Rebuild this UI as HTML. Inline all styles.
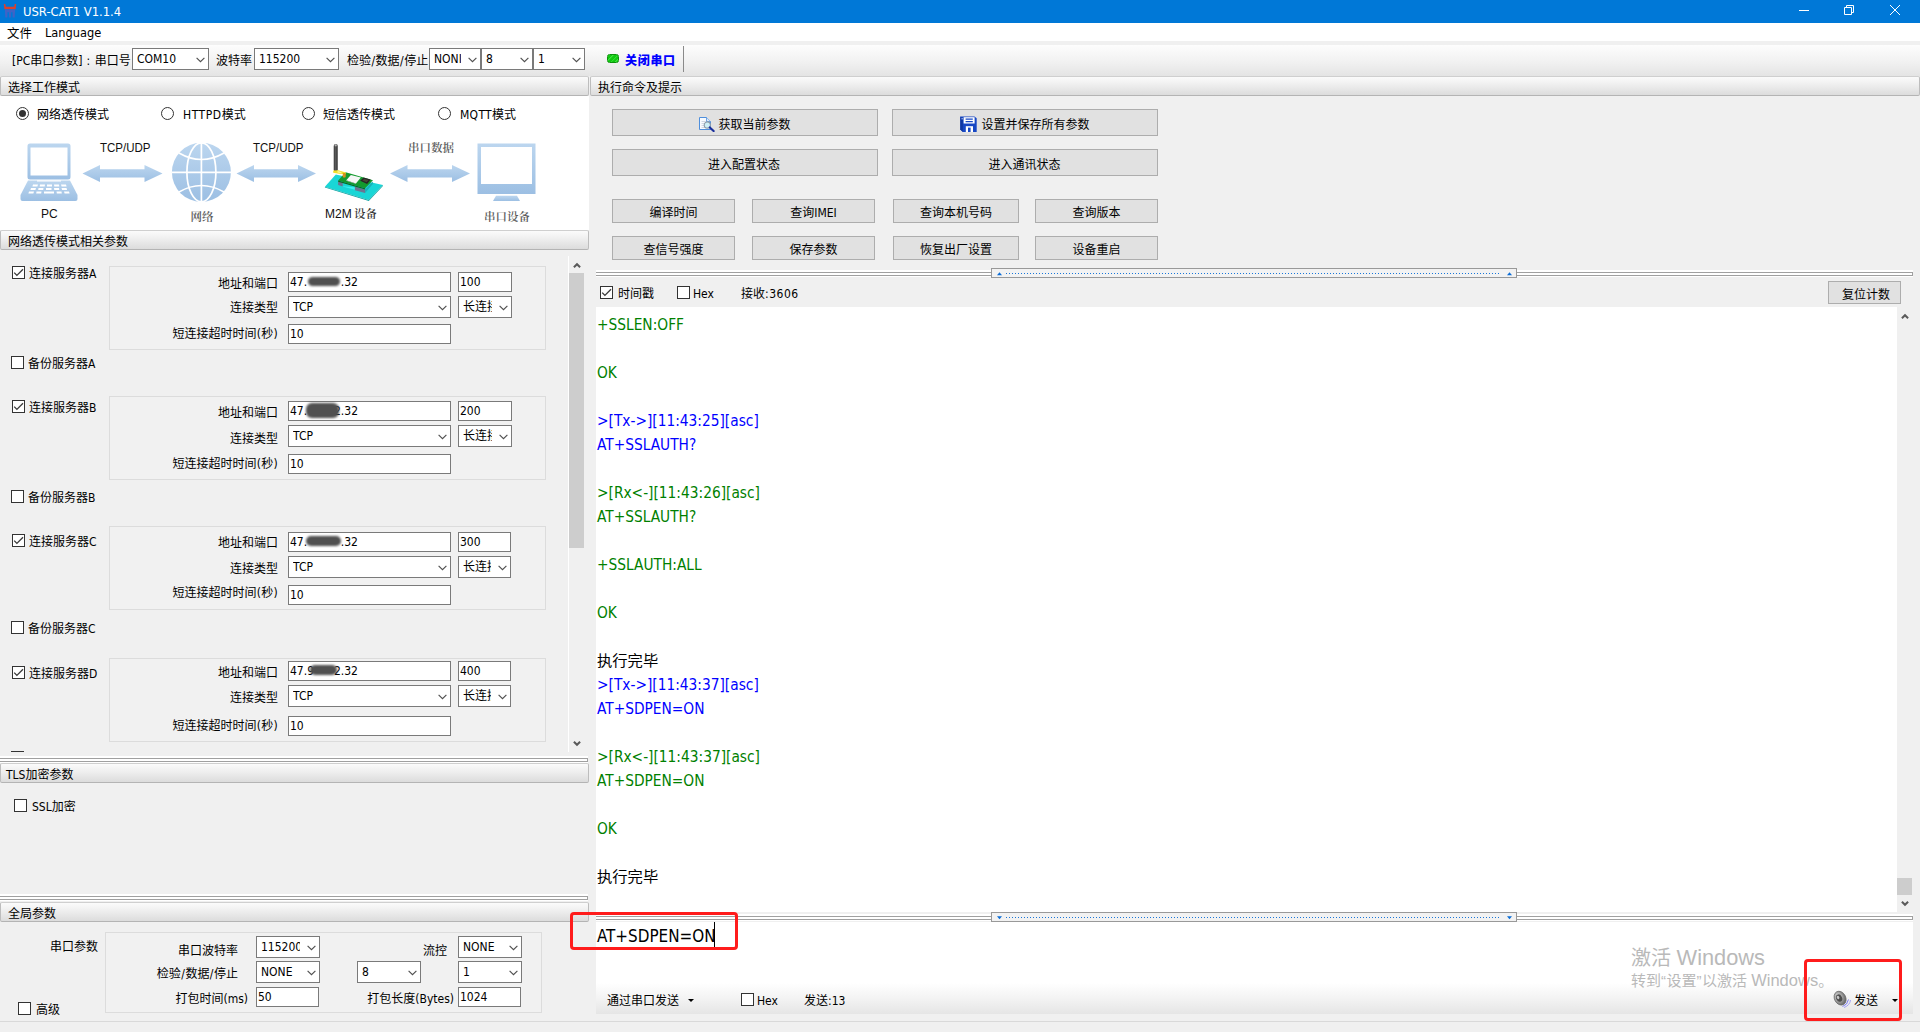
<!DOCTYPE html><html lang="zh-CN"><head><meta charset="utf-8"><title>USR-CAT1 V1.1.4</title><style>
*{box-sizing:border-box;margin:0;padding:0}
html,body{width:1920px;height:1032px;overflow:hidden;background:#f0f0f0}
body{font-family:"DejaVu Sans Condensed","Liberation Sans","Noto Sans CJK SC",sans-serif;font-size:12px;color:#000;position:relative}
#app{position:absolute;left:0;top:0;width:1920px;height:1032px;overflow:hidden;background:#f0f0f0}
.a{position:absolute}
.t{position:absolute;white-space:nowrap;font-size:12px;line-height:14px;height:14px}
.r{text-align:right}
.hd{position:absolute;height:20px;border:1px solid #bdbdbd;border-top-color:#cfcfcf;border-bottom-color:#b4b4b4;border-radius:2px;background:linear-gradient(#fbfbfb,#eeeeee 45%,#dcdcdc);}
.hd span{position:absolute;left:7px;top:4px;line-height:14px;white-space:nowrap}
.in{position:absolute;background:#fff;border:1px solid #7a7a7a;height:20px;line-height:18px;padding-left:1px;white-space:nowrap;overflow:hidden}
.cb{position:absolute;background:#fff;border:1px solid #7a7a7a;height:22px;line-height:20px;padding-left:4px;white-space:nowrap;overflow:hidden}
.cl{display:block;overflow:hidden;height:100%}
.cb svg{position:absolute;right:3.5px;top:7.5px}
.ck{position:absolute;width:13px;height:13px;border:1px solid #333;background:#fff}
.ck svg{position:absolute;left:0;top:0}
.gb{position:absolute;border:1px solid #dcdcdc;background:#f1f1f1}
.bt{position:absolute;background:#e1e1e1;border:1px solid #adadad;text-align:center;white-space:nowrap}
.rd{position:absolute;width:13px;height:13px;border:1px solid #333;border-radius:50%;background:#fff}
.rd i{position:absolute;left:2px;top:2px;width:7px;height:7px;border-radius:50%;background:#333}
.log{position:absolute;font-size:15.3px;line-height:24px;white-space:pre}
.sl{display:inline-block;width:4.6px;text-align:center}.pr{display:inline-block;width:4.7px;text-align:center}
.g{color:#008000}.b{color:#0000ff}
.smudge{position:absolute;background:#505050;border-radius:6px;filter:blur(0.8px)}
</style></head><body><div id="app">
<div class="a" style="left:0;top:0;width:1920px;height:23px;background:#0078d7"></div>
<svg class="a" style="left:0;top:0" width="20" height="23" viewBox="0 0 20 23"><path d="M3.8 4 L5.3 4 L5.9 6.8 H14.1 L14.7 4 L16.2 4 L15.6 9.3 H4.4 Z" fill="#d9412e"/><path d="M4.9 9.6 H15.1 L14.7 17.6 H12.7 L12.5 12.2 H11 L10.9 17.6 H9.1 L9 12.2 H7.5 L7.3 17.6 H5.3 Z" fill="#3f63c6"/></svg>
<div class="t" style="left:23px;top:4px;color:#fff;font-size:12.9px;line-height:16px;height:16px">USR-CAT1 V1.1.4</div>
<svg class="a" style="left:1790px;top:0" width="130" height="23" viewBox="0 0 130 23"><g stroke="#fff" stroke-width="1" fill="none"><path d="M9 10.5 H19"/><path d="M54.5 7.5 H61.5 V14.5 H54.5 Z M56.5 7.5 V5.5 H63.5 V12.5 H61.5"/><path d="M100 5 L110 15 M110 5 L100 15"/></g></svg>
<div class="a" style="left:0;top:23px;width:1920px;height:18px;background:#fff"></div>
<div class="t " style="left:7px;top:27px;font-size:12.4px;letter-spacing:.2px">文件</div>
<div class="t " style="left:45px;top:26px;font-size:12.7px">Language</div>
<div class="a" style="left:0;top:45px;width:1920px;height:31px;background:linear-gradient(#fdfdfd,#f1f1f1 55%,#e4e4e4)"></div>
<div class="t " style="left:12px;top:54px;">[PC串口参数]<span style="letter-spacing:.6px"> : </span>串口号</div>
<div class="cb" style="left:132px;top:48px;width:77px;height:22px;line-height:20px"><span class="cl" style="width:52px">COM10</span><svg width="9" height="6" viewBox="0 0 9 6"><path d="M0.6 0.8 L4.5 4.6 L8.4 0.8" fill="none" stroke="#505050" stroke-width="1.15"/></svg></div>
<div class="t " style="left:216px;top:54px;">波特率</div>
<div class="cb" style="left:254px;top:48px;width:85px;height:22px;line-height:20px"><span class="cl" style="width:60px">115200</span><svg width="9" height="6" viewBox="0 0 9 6"><path d="M0.6 0.8 L4.5 4.6 L8.4 0.8" fill="none" stroke="#505050" stroke-width="1.15"/></svg></div>
<div class="t " style="left:347px;top:54px;">检验<span class="sl">/</span>数据<span class="sl">/</span>停止</div>
<div class="cb" style="left:429px;top:48px;width:52px;height:22px;line-height:20px"><span class="cl" style="width:27px">NONI</span><svg width="9" height="6" viewBox="0 0 9 6"><path d="M0.6 0.8 L4.5 4.6 L8.4 0.8" fill="none" stroke="#505050" stroke-width="1.15"/></svg></div>
<div class="cb" style="left:481px;top:48px;width:52px;height:22px;line-height:20px"><span class="cl" style="width:27px">8</span><svg width="9" height="6" viewBox="0 0 9 6"><path d="M0.6 0.8 L4.5 4.6 L8.4 0.8" fill="none" stroke="#505050" stroke-width="1.15"/></svg></div>
<div class="cb" style="left:533px;top:48px;width:52px;height:22px;line-height:20px"><span class="cl" style="width:27px">1</span><svg width="9" height="6" viewBox="0 0 9 6"><path d="M0.6 0.8 L4.5 4.6 L8.4 0.8" fill="none" stroke="#505050" stroke-width="1.15"/></svg></div>
<div class="a" style="left:607px;top:54px;width:12px;height:9px;border-radius:2.5px;border:1px solid #0b920b;background:repeating-linear-gradient(135deg,#4be84b 0,#10c810 1.6px,#10c810 3.2px)"></div>
<div class="t " style="left:625px;top:54px;color:#0000ff;font-weight:900;font-size:12px;letter-spacing:.7px">关闭串口</div>
<div class="a" style="left:683px;top:46px;width:1px;height:26px;background:#8a8a8a"></div>
<div class="hd" style="left:0px;top:76px;width:589px"><span>选择工作模式</span></div>
<div class="a" style="left:0;top:96px;width:589px;height:134px;background:#fff"></div>
<div class="rd" style="left:16px;top:107px"><i></i></div>
<div class="t " style="left:37px;top:108px;">网络透传模式</div>
<div class="rd" style="left:161px;top:107px"></div>
<div class="t " style="left:183px;top:108px;"><span style="letter-spacing:.55px">HTTPD</span>模式</div>
<div class="rd" style="left:302px;top:107px"></div>
<div class="t " style="left:323px;top:108px;">短信透传模式</div>
<div class="rd" style="left:438px;top:107px"></div>
<div class="t " style="left:460px;top:108px;"><span style="letter-spacing:.3px">MQTT</span>模式</div>
<svg class="a" style="left:0;top:130px" width="589" height="100" viewBox="0 130 589 100">
<defs><linearGradient id="lb" x1="0" y1="0" x2="0" y2="1"><stop offset="0" stop-color="#bcd6ef"/><stop offset="1" stop-color="#9cbfe3"/></linearGradient></defs>
<g fill="url(#lb)">
<path d="M30 143.5 H68 Q70.5 143.5 70.5 146 V177 Q70.5 179.5 68 179.5 H30 Q27.5 179.5 27.5 177 V146 Q27.5 143.5 30 143.5 Z M30.5 147.5 V175.5 H67.5 V147.5 Z" fill-rule="evenodd"/>
<path d="M28 180.5 H70 L77.5 195 V199 Q77.5 201 75.5 201 H22.5 Q20.5 201 20.5 199 V195 Z"/>
<path d="M82.5 173.4 L100 165 V169.3 H144.5 V165 L162.5 173.4 L144.5 182 V177.6 H100 V182 Z"/>
<path d="M236.5 173.4 L254 165 V169.3 H298 V165 L316 173.4 L298 182 V177.6 H254 V182 Z"/>
<path d="M390 173.4 L407.5 165 V169.3 H452 V165 L470 173.4 L452 182 V177.6 H407.5 V182 Z"/>
<circle cx="201.4" cy="172.3" r="29.5"/>
<path d="M477.5 143.5 H535.5 V194 H477.5 Z M481 147 V184 H532 V147 Z" fill-rule="evenodd"/>
<path d="M496 195.8 H517 L520 201 H493 Z"/>
</g>
<g stroke="#fff" stroke-width="1.7" fill="none">
<path d="M201.4 142.5 V202"/><path d="M171.5 172.3 H231.5"/>
<ellipse cx="201.4" cy="172.3" rx="14.5" ry="29.5"/>
<path d="M179 153 Q201.4 166 224 153"/><path d="M179 192 Q201.4 179 224 192"/>
</g>
<g fill="#fff">
<path d="M33 184.5 h5 l-.6 2 h-5z M40 184.5 h5 l-.3 2 h-5z M47 184.5 h5 l0 2 h-5z M54 184.5 h5 l.3 2 h-5z M61 184.5 h5 l.6 2 h-5z"/>
<path d="M31 188 h5 l-.6 2 h-5z M38.5 188 h5 l-.3 2 h-5z M46 188 h5.5 l0 2 h-5.5z M54 188 h5 l.3 2 h-5z M61.5 188 h5 l.6 2 h-5z"/>
<path d="M29 191.5 h5 l-.6 2 h-5z M36.5 191.5 h5 l-.3 2 h-5z M44 191.5 h10 l0 2 h-10z M56.5 191.5 h5 l.3 2 h-5z M64 191.5 h5 l.6 2 h-5z"/>
<rect x="37" y="180.3" width="24" height="1.2"/>
</g>
<!-- m2m device -->
<path d="M324.9 186.7 L335.8 174.6 L382.9 185.1 L368.7 199.9 Z" fill="#19d6d6"/>
<path d="M324.9 186.7 L368.7 199.9 L382.9 185.1 L382.9 186 L368.8 200.9 L324.9 187.6 Z" fill="#0fa3a3"/>
<path d="M342 186.2 L355 187.3 L355 189.8 L342.5 186.5 Z" fill="#3af2f2"/>
<path d="M338.1 181.3 L342.7 182.7 V186.4 L338.1 185 Z" fill="#6c7492"/>
<path d="M354.9 186.6 L365.1 189.4 V193 L354.9 190.2 Z" fill="#6c7492"/>
<path d="M365.1 189.4 L372.8 181.6 V184 L365.1 193 Z" fill="#1ab0b8"/>
<path d="M338.1 180.6 L345.7 172.3 L373 180.2 L365.1 188.3 Z" fill="#139a2e"/>
<path d="M338.1 180.6 L365.1 188.3 V189.6 L338.1 181.8 Z" fill="#0b6a20"/>
<path d="M346.3 180.2 L350.9 174.9 L360.8 177.5 L355.9 183.5 Z" fill="#f6f6f6"/>
<path d="M346.3 180.2 L355.9 183.5 L356.2 184.1 L346.2 180.8 Z" fill="#b9b9c4"/>
<path d="M360.2 180.8 L363.5 177.5 L370.7 179.5 L367.1 184.1 Z" fill="#262626"/>
<path d="M362.3 180.6 L364.2 178.9 L368.6 180.1 L366.6 182.2 Z" fill="#4a4436"/>
<rect x="333.7" y="143.9" width="4.1" height="27.5" rx="2" fill="#474747"/>
<rect x="334.6" y="144.3" width="2.2" height="2.2" rx="1.1" fill="#b5b5b5"/>
<rect x="335.1" y="147" width="1" height="23" fill="#6a6a6a" opacity=".6"/>
<path d="M333.2 170.4 L338.2 170.2 L345.8 172.4 L345.8 174.2 L340.5 174 L333.2 172.8 Z" fill="#efe02a"/>
<path d="M337.5 171 L341.5 172 L341.5 173.5 L337.5 172.6 Z" fill="#f8f3a0"/>
<rect x="342.8" y="172.9" width="2.9" height="4.6" rx=".8" fill="#d98f22"/>
<g font-family="Liberation Sans, sans-serif" font-size="12" fill="#111">
<text x="100" y="151.8" textLength="50.5" lengthAdjust="spacingAndGlyphs">TCP/UDP</text>
<text x="253" y="151.8" textLength="50.5" lengthAdjust="spacingAndGlyphs">TCP/UDP</text>
<text x="41" y="217.6">PC</text>
<text x="325" y="217.6">M2M</text>
</g>
<g font-family="Noto Serif CJK SC, serif" font-size="11.5" font-weight="600" fill="#5a5a5a">
<text x="190.5" y="221">网络</text>
<text x="408" y="151.5">串口数据</text>
<text x="484" y="221">串口设备</text>
<text x="354" y="217.8" fill="#333">设备</text>
</g>
</svg>
<div class="hd" style="left:0px;top:230px;width:589px"><span>网络透传模式相关参数</span></div>
<div class="a" style="left:0;top:251px;width:589px;height:506px;overflow:hidden">
<div class="a" style="left:0;top:-251px;width:589px;height:760px">
<div class="ck" style="left:12px;top:266px"><svg width="11" height="11" viewBox="0 0 11 11"><path d="M1.2 5.6 L3.9 8.4 L10 2.3" fill="none" stroke="#3c3c3c" stroke-width="1.35"/></svg></div>
<div class="t " style="left:29px;top:267px;">连接服务器A</div>
<div class="gb" style="left:109px;top:266px;width:437px;height:84px"></div>
<div class="t r" style="left:-22px;width:300px;top:277px;">地址和端口</div>
<div class="in" style="left:288px;top:272px;width:163px;height:20px;line-height:18px">47.<span style="display:inline-block;width:33.6px"></span>.32</div>
<div class="in" style="left:458px;top:272px;width:54px;height:20px;line-height:18px">100</div>
<div class="t r" style="left:-22px;width:300px;top:301px;">连接类型</div>
<div class="cb" style="left:288px;top:296px;width:163px;height:22px;line-height:20px"><span class="cl" style="width:138px">TCP</span><svg width="9" height="6" viewBox="0 0 9 6"><path d="M0.6 0.8 L4.5 4.6 L8.4 0.8" fill="none" stroke="#505050" stroke-width="1.15"/></svg></div>
<div class="cb" style="left:458px;top:296px;width:54px;height:22px;line-height:20px"><span class="cl" style="width:29px">长连接</span><svg width="9" height="6" viewBox="0 0 9 6"><path d="M0.6 0.8 L4.5 4.6 L8.4 0.8" fill="none" stroke="#505050" stroke-width="1.15"/></svg></div>
<div class="t r" style="left:-22px;width:300px;top:327px;">短连接超时时间<span class="pr">(</span>秒<span class="pr">)</span></div>
<div class="in" style="left:288px;top:324px;width:163px;height:20px;line-height:18px">10</div>
<div class="ck" style="left:11px;top:356px"></div>
<div class="t " style="left:28px;top:357px;">备份服务器A</div>
<div class="smudge" style="left:308px;top:277px;width:32px;height:9px"></div>
<div class="ck" style="left:12px;top:400px"><svg width="11" height="11" viewBox="0 0 11 11"><path d="M1.2 5.6 L3.9 8.4 L10 2.3" fill="none" stroke="#3c3c3c" stroke-width="1.35"/></svg></div>
<div class="t " style="left:29px;top:401px;">连接服务器B</div>
<div class="gb" style="left:109px;top:396px;width:437px;height:84px"></div>
<div class="t r" style="left:-22px;width:300px;top:406px;">地址和端口</div>
<div class="in" style="left:288px;top:401px;width:163px;height:20px;line-height:18px">47.<span style="display:inline-block;width:26.8px"></span>2.32</div>
<div class="in" style="left:458px;top:401px;width:54px;height:20px;line-height:18px">200</div>
<div class="t r" style="left:-22px;width:300px;top:432px;">连接类型</div>
<div class="cb" style="left:288px;top:425px;width:163px;height:22px;line-height:20px"><span class="cl" style="width:138px">TCP</span><svg width="9" height="6" viewBox="0 0 9 6"><path d="M0.6 0.8 L4.5 4.6 L8.4 0.8" fill="none" stroke="#505050" stroke-width="1.15"/></svg></div>
<div class="cb" style="left:458px;top:425px;width:54px;height:22px;line-height:20px"><span class="cl" style="width:29px">长连接</span><svg width="9" height="6" viewBox="0 0 9 6"><path d="M0.6 0.8 L4.5 4.6 L8.4 0.8" fill="none" stroke="#505050" stroke-width="1.15"/></svg></div>
<div class="t r" style="left:-22px;width:300px;top:457px;">短连接超时时间<span class="pr">(</span>秒<span class="pr">)</span></div>
<div class="in" style="left:288px;top:454px;width:163px;height:20px;line-height:18px">10</div>
<div class="ck" style="left:11px;top:490px"></div>
<div class="t " style="left:28px;top:491px;">备份服务器B</div>
<div class="smudge" style="left:306px;top:403px;width:33px;height:15px"></div>
<div class="ck" style="left:12px;top:534px"><svg width="11" height="11" viewBox="0 0 11 11"><path d="M1.2 5.6 L3.9 8.4 L10 2.3" fill="none" stroke="#3c3c3c" stroke-width="1.35"/></svg></div>
<div class="t " style="left:29px;top:535px;">连接服务器C</div>
<div class="gb" style="left:109px;top:526px;width:437px;height:84px"></div>
<div class="t r" style="left:-22px;width:300px;top:536px;">地址和端口</div>
<div class="in" style="left:288px;top:532px;width:163px;height:20px;line-height:18px">47.<span style="display:inline-block;width:33.6px"></span>.32</div>
<div class="in" style="left:458px;top:532px;width:53px;height:20px;line-height:18px">300</div>
<div class="t r" style="left:-22px;width:300px;top:562px;">连接类型</div>
<div class="cb" style="left:288px;top:556px;width:163px;height:22px;line-height:20px"><span class="cl" style="width:138px">TCP</span><svg width="9" height="6" viewBox="0 0 9 6"><path d="M0.6 0.8 L4.5 4.6 L8.4 0.8" fill="none" stroke="#505050" stroke-width="1.15"/></svg></div>
<div class="cb" style="left:458px;top:556px;width:53px;height:22px;line-height:20px"><span class="cl" style="width:28px">长连接</span><svg width="9" height="6" viewBox="0 0 9 6"><path d="M0.6 0.8 L4.5 4.6 L8.4 0.8" fill="none" stroke="#505050" stroke-width="1.15"/></svg></div>
<div class="t r" style="left:-22px;width:300px;top:586px;">短连接超时时间<span class="pr">(</span>秒<span class="pr">)</span></div>
<div class="in" style="left:288px;top:585px;width:163px;height:20px;line-height:18px">10</div>
<div class="ck" style="left:11px;top:621px"></div>
<div class="t " style="left:28px;top:622px;">备份服务器C</div>
<div class="smudge" style="left:306px;top:536px;width:35px;height:10px"></div>
<div class="ck" style="left:12px;top:666px"><svg width="11" height="11" viewBox="0 0 11 11"><path d="M1.2 5.6 L3.9 8.4 L10 2.3" fill="none" stroke="#3c3c3c" stroke-width="1.35"/></svg></div>
<div class="t " style="left:29px;top:667px;">连接服务器D</div>
<div class="gb" style="left:109px;top:658px;width:437px;height:84px"></div>
<div class="t r" style="left:-22px;width:300px;top:666px;">地址和端口</div>
<div class="in" style="left:288px;top:661px;width:163px;height:20px;line-height:18px">47.9<span style="display:inline-block;width:19.9px"></span>2.32</div>
<div class="in" style="left:458px;top:661px;width:53px;height:20px;line-height:18px">400</div>
<div class="t r" style="left:-22px;width:300px;top:691px;">连接类型</div>
<div class="cb" style="left:288px;top:685px;width:163px;height:22px;line-height:20px"><span class="cl" style="width:138px">TCP</span><svg width="9" height="6" viewBox="0 0 9 6"><path d="M0.6 0.8 L4.5 4.6 L8.4 0.8" fill="none" stroke="#505050" stroke-width="1.15"/></svg></div>
<div class="cb" style="left:458px;top:685px;width:53px;height:22px;line-height:20px"><span class="cl" style="width:28px">长连接</span><svg width="9" height="6" viewBox="0 0 9 6"><path d="M0.6 0.8 L4.5 4.6 L8.4 0.8" fill="none" stroke="#505050" stroke-width="1.15"/></svg></div>
<div class="t r" style="left:-22px;width:300px;top:719px;">短连接超时时间<span class="pr">(</span>秒<span class="pr">)</span></div>
<div class="in" style="left:288px;top:716px;width:163px;height:20px;line-height:18px">10</div>
<div class="smudge" style="left:310px;top:665px;width:27px;height:10px"></div>
<div class="a" style="left:11px;top:751px;width:13px;height:1px;background:#333"></div>
</div></div>
<div class="a" style="left:568px;top:256px;width:17px;height:495px;background:#f0f0f0"></div>
<div class="a" style="left:569px;top:273px;width:15px;height:275px;background:#cdcdcd"></div>
<div class="a" style="left:568px;top:256px;width:1px;height:496px;background:#fff"></div>
<svg class="a" style="left:573px;top:262px" width="8" height="6" viewBox="0 0 8 6"><path d="M0.9 5.3 L4 2.2 L7.1 5.3" fill="none" stroke="#5a5a5a" stroke-width="2"/></svg>
<svg class="a" style="left:573px;top:741px" width="8" height="6" viewBox="0 0 8 6"><path d="M0.9 0.7 L4 3.8 L7.1 0.7" fill="none" stroke="#5a5a5a" stroke-width="2"/></svg>
<div class="a" style="left:0px;top:756px;width:588px;height:7px;background:#fff"></div>
<div class="a" style="left:0px;top:758px;width:588px;height:4px;border-top:1px solid #a0a0a0;border-bottom:1px solid #a0a0a0;border-right:1px solid #a0a0a0"></div>
<div class="hd" style="left:0px;top:763px;width:589px"><span><span style="position:static;margin-left:-2px">TLS</span>加密参数</span></div>
<div class="ck" style="left:14px;top:799px"></div>
<div class="t " style="left:32px;top:800px;">SSL加密</div>
<div class="a" style="left:0px;top:894px;width:588px;height:7px;background:#fff"></div>
<div class="a" style="left:0px;top:896px;width:588px;height:4px;border-top:1px solid #a0a0a0;border-bottom:1px solid #a0a0a0;border-right:1px solid #a0a0a0"></div>
<div class="hd" style="left:0px;top:902px;width:589px"><span>全局参数</span></div>
<div class="t " style="left:50px;top:940px;">串口参数</div>
<div class="gb" style="left:105px;top:932px;width:437px;height:81px"></div>
<div class="t r" style="left:-62px;width:300px;top:944px;">串口波特率</div>
<div class="cb" style="left:256px;top:936px;width:64px;height:22px;line-height:20px"><span class="cl" style="width:39px">115200</span><svg width="9" height="6" viewBox="0 0 9 6"><path d="M0.6 0.8 L4.5 4.6 L8.4 0.8" fill="none" stroke="#505050" stroke-width="1.15"/></svg></div>
<div class="t r" style="left:147px;width:300px;top:944px;">流控</div>
<div class="cb" style="left:458px;top:936px;width:64px;height:22px;line-height:20px"><span class="cl" style="width:39px">NONE</span><svg width="9" height="6" viewBox="0 0 9 6"><path d="M0.6 0.8 L4.5 4.6 L8.4 0.8" fill="none" stroke="#505050" stroke-width="1.15"/></svg></div>
<div class="t r" style="left:-62px;width:300px;top:967px;">检验<span class="sl">/</span>数据<span class="sl">/</span>停止</div>
<div class="cb" style="left:256px;top:961px;width:64px;height:22px;line-height:20px"><span class="cl" style="width:39px">NONE</span><svg width="9" height="6" viewBox="0 0 9 6"><path d="M0.6 0.8 L4.5 4.6 L8.4 0.8" fill="none" stroke="#505050" stroke-width="1.15"/></svg></div>
<div class="cb" style="left:357px;top:961px;width:64px;height:22px;line-height:20px"><span class="cl" style="width:39px">8</span><svg width="9" height="6" viewBox="0 0 9 6"><path d="M0.6 0.8 L4.5 4.6 L8.4 0.8" fill="none" stroke="#505050" stroke-width="1.15"/></svg></div>
<div class="cb" style="left:458px;top:961px;width:64px;height:22px;line-height:20px"><span class="cl" style="width:39px">1</span><svg width="9" height="6" viewBox="0 0 9 6"><path d="M0.6 0.8 L4.5 4.6 L8.4 0.8" fill="none" stroke="#505050" stroke-width="1.15"/></svg></div>
<div class="t r" style="left:-52px;width:300px;top:992px;">打包时间(ms)</div>
<div class="in" style="left:256px;top:987px;width:63px;height:20px;line-height:18px">50</div>
<div class="t r" style="left:154px;width:300px;top:992px;">打包长度(Bytes)</div>
<div class="in" style="left:458px;top:987px;width:63px;height:20px;line-height:18px">1024</div>
<div class="ck" style="left:18px;top:1002px"></div>
<div class="t " style="left:36px;top:1003px;">高级</div>
<div class="hd" style="left:590px;top:76px;width:1330px"><span>执行命令及提示</span></div>
<div class="bt" style="left:612px;top:109px;width:266px;height:27px;line-height:25px;padding-top:3px;padding-right:0.5px;"><svg width="16" height="16" viewBox="0 0 16 16" style="vertical-align:-3px;margin-right:3.5px"><path d="M0.5 1.5 H7.5 L11.5 5.5 V13.5 H0.5 Z" fill="#f8fbff" stroke="#4f8fdc"/><path d="M7.5 1.5 V5.5 H11.5" fill="#dbe9fa" stroke="#4f8fdc" stroke-width=".8"/><path d="M2.5 5.5h4M2.5 7.5h3M2.5 9.5h3M2.5 11.5h4" stroke="#d0d8e4" stroke-width="1"/><circle cx="8.3" cy="9" r="3.1" fill="#cdeff7" stroke="#8a9aa8" stroke-width="1.1"/><path d="M10.8 11.5 L14.6 15" stroke="#1a2f9c" stroke-width="2.2" stroke-linecap="round"/></svg>获取当前参数</div>
<div class="bt" style="left:892px;top:109px;width:266px;height:27px;line-height:25px;padding-top:3px;"><svg width="17" height="16" viewBox="0 0 17 16" style="vertical-align:-3px;margin-right:4px"><path d="M0.3 0.5 H14.5 L16.7 2.2 V16 H2.8 L0.3 13.6 Z" fill="#1747c4"/><path d="M0.3 0.5 V13.6 L2.8 16 V3 Z" fill="#0f36a0"/><rect x="3.6" y="1.2" width="11" height="6.3" fill="#fff"/><path d="M5.6 3.2h7.2M5.6 5.6h7.2" stroke="#1747c4" stroke-width="1.2"/><path d="M5.8 10.2 H13 V16 H5.8 Z" fill="#fff"/><rect x="8" y="11.6" width="2.6" height="4.4" fill="#1747c4"/><rect x="1.6" y="2" width="1" height="1.4" fill="#cfe0ff"/></svg>设置并保存所有参数</div>
<div class="bt" style="left:612px;top:149px;width:266px;height:27px;line-height:25px;padding-top:3px;padding-right:2px;">进入配置状态</div>
<div class="bt" style="left:892px;top:149px;width:266px;height:27px;line-height:25px;padding-top:3px;padding-right:1.0px;">进入通讯状态</div>
<div class="bt" style="left:612px;top:199px;width:123px;height:24px;line-height:22px;padding-top:2px;">编译时间</div>
<div class="bt" style="left:752px;top:199px;width:123px;height:24px;line-height:22px;padding-top:2px;">查询IMEI</div>
<div class="bt" style="left:893px;top:199px;width:126px;height:24px;line-height:22px;padding-top:2px;">查询本机号码</div>
<div class="bt" style="left:1035px;top:199px;width:123px;height:24px;line-height:22px;padding-top:2px;">查询版本</div>
<div class="bt" style="left:612px;top:236px;width:123px;height:24px;line-height:22px;padding-top:2px;">查信号强度</div>
<div class="bt" style="left:752px;top:236px;width:123px;height:24px;line-height:22px;padding-top:2px;">保存参数</div>
<div class="bt" style="left:893px;top:236px;width:126px;height:24px;line-height:22px;padding-top:2px;">恢复出厂设置</div>
<div class="bt" style="left:1035px;top:236px;width:123px;height:24px;line-height:22px;padding-top:2px;">设备重启</div>
<div class="a" style="left:596px;top:270px;width:1317px;height:7px;background:#fff"></div>
<div class="a" style="left:596px;top:272px;width:1317px;height:4px;border-top:1px solid #a0a0a0;border-bottom:1px solid #a0a0a0;border-right:1px solid #a0a0a0"></div>
<div class="a" style="left:991px;top:268px;width:526px;height:10px;border:1px solid #999;background:#f2f2f2"></div>
<div class="a" style="left:1006px;top:273px;width:493px;height:1px;background:repeating-linear-gradient(90deg,#1976d8 0,#1976d8 1px,transparent 1px,transparent 3px)"></div>
<svg class="a" style="left:997px;top:272px" width="5" height="3.5" viewBox="0 0 5 3.5"><path d="M0 3.2 L2.5 0.2 L5 3.2 Z" fill="#0a6cd6"/></svg>
<svg class="a" style="left:1507px;top:272px" width="5" height="3.5" viewBox="0 0 5 3.5"><path d="M0 3.2 L2.5 0.2 L5 3.2 Z" fill="#0a6cd6"/></svg>
<div class="ck" style="left:600px;top:286px"><svg width="11" height="11" viewBox="0 0 11 11"><path d="M1.2 5.6 L3.9 8.4 L10 2.3" fill="none" stroke="#3c3c3c" stroke-width="1.35"/></svg></div>
<div class="t " style="left:618px;top:287px;">时间戳</div>
<div class="ck" style="left:677px;top:286px"></div>
<div class="t " style="left:693px;top:287px;">Hex</div>
<div class="t " style="left:741px;top:287px;">接收<span style="letter-spacing:.5px">:3606</span></div>
<div class="bt" style="left:1828px;top:281px;width:73px;height:23px;line-height:21px;padding-top:3px;padding-left:3.0px;">复位计数</div>
<div class="a" style="left:596px;top:307px;width:1301px;height:605px;background:#fff"></div>
<div class="log" style="left:597px;top:313px"><div class="g" style="height:24px">+SSLEN:OFF</div><div class="" style="height:24px"></div><div class="g" style="height:24px">OK</div><div class="" style="height:24px"></div><div class="b" style="height:24px">&gt;[Tx-&gt;][11:43:25][asc]</div><div class="b" style="height:24px">AT+SSLAUTH?</div><div class="" style="height:24px"></div><div class="g" style="height:24px">&gt;[Rx&lt;-][11:43:26][asc]</div><div class="g" style="height:24px">AT+SSLAUTH?</div><div class="" style="height:24px"></div><div class="g" style="height:24px">+SSLAUTH:ALL</div><div class="" style="height:24px"></div><div class="g" style="height:24px">OK</div><div class="" style="height:24px"></div><div class="" style="height:24px">执行完毕</div><div class="b" style="height:24px">&gt;[Tx-&gt;][11:43:37][asc]</div><div class="b" style="height:24px">AT+SDPEN=ON</div><div class="" style="height:24px"></div><div class="g" style="height:24px">&gt;[Rx&lt;-][11:43:37][asc]</div><div class="g" style="height:24px">AT+SDPEN=ON</div><div class="" style="height:24px"></div><div class="g" style="height:24px">OK</div><div class="" style="height:24px"></div><div class="" style="height:24px">执行完毕</div></div>
<div class="a" style="left:1897px;top:307px;width:16px;height:605px;background:#f0f0f0"></div>
<div class="a" style="left:1897px;top:878px;width:15px;height:17px;background:#cdcdcd"></div>
<svg class="a" style="left:1901px;top:313px" width="8" height="6" viewBox="0 0 8 6"><path d="M0.9 5.3 L4 2.2 L7.1 5.3" fill="none" stroke="#5a5a5a" stroke-width="2"/></svg>
<svg class="a" style="left:1901px;top:901px" width="8" height="6" viewBox="0 0 8 6"><path d="M0.9 0.7 L4 3.8 L7.1 0.7" fill="none" stroke="#5a5a5a" stroke-width="2"/></svg>
<div class="a" style="left:596px;top:914px;width:1317px;height:7px;background:#fff"></div>
<div class="a" style="left:596px;top:916px;width:1317px;height:4px;border-top:1px solid #a0a0a0;border-bottom:1px solid #a0a0a0;border-right:1px solid #a0a0a0"></div>
<div class="a" style="left:991px;top:912px;width:526px;height:10px;border:1px solid #999;background:#f2f2f2"></div>
<div class="a" style="left:1006px;top:917px;width:493px;height:1px;background:repeating-linear-gradient(90deg,#1976d8 0,#1976d8 1px,transparent 1px,transparent 3px)"></div>
<svg class="a" style="left:997px;top:916px" width="5" height="3.5" viewBox="0 0 5 3.5"><path d="M0 0.3 L5 0.3 L2.5 3.3 Z" fill="#0a6cd6"/></svg>
<svg class="a" style="left:1507px;top:916px" width="5" height="3.5" viewBox="0 0 5 3.5"><path d="M0 0.3 L5 0.3 L2.5 3.3 Z" fill="#0a6cd6"/></svg>
<div class="a" style="left:596px;top:922px;width:1317px;height:61px;background:#fff"></div>
<div class="a" style="left:596px;top:983px;width:1317px;height:31px;background:linear-gradient(#ffffff,#f3f3f3 50%,#e5e5e5)"></div>
<div class="log" style="left:597px;top:924px;font-size:16.9px;line-height:24px">AT+SDPEN=ON</div>
<div class="a" style="left:714px;top:922px;width:1px;height:26px;background:#000"></div>
<div class="t " style="left:607px;top:994px;">通过串口发送</div>
<svg class="a" style="left:688px;top:999px" width="6" height="3" viewBox="0 0 6 3"><path d="M0 0 H6 L3 3 Z" fill="#000"/></svg>
<div class="ck" style="left:741px;top:993px"></div>
<div class="t " style="left:757px;top:994px;">Hex</div>
<div class="t " style="left:804px;top:994px;">发送:13</div>
<div class="t" style="left:1631px;top:945px;font-size:20px;line-height:26px;height:26px;color:#b9b9b9;font-family:'Liberation Sans','Noto Sans CJK SC',sans-serif">激活 <span style="font-size:21.8px">Windows</span></div>
<div class="t" style="left:1631px;top:970px;font-size:15px;line-height:20px;height:20px;color:#b9b9b9;font-family:'Liberation Sans','Noto Sans CJK SC',sans-serif">转到<span style="letter-spacing:.5px">“</span>设置<span style="letter-spacing:.5px">”</span>以激活 <span style="font-size:16.5px">Windows</span>。</div>
<svg class="a" style="left:1832px;top:990px" width="20" height="18" viewBox="0 0 20 18"><defs><radialGradient id="spk" cx=".4" cy=".35" r=".7"><stop offset="0" stop-color="#e8e8e8"/><stop offset=".55" stop-color="#9a9a9a"/><stop offset="1" stop-color="#5a5a5a"/></radialGradient></defs><g transform="rotate(-28 8 8)"><ellipse cx="8" cy="8.2" rx="5.6" ry="7.2" fill="url(#spk)" stroke="#6e6e6e" stroke-width=".8"/><ellipse cx="7.2" cy="7.6" rx="2.9" ry="3.8" fill="#4c4c4c"/><ellipse cx="6.5" cy="6.6" rx="1.3" ry="1.7" fill="#c9c9c9"/></g><path d="M10.5 16.5 Q15.5 15 16.5 9.5" fill="none" stroke="#7a7af0" stroke-width="1"/><path d="M12 17.5 Q17.8 15.5 18.5 10" fill="none" stroke="#9a9af5" stroke-width=".9"/></svg>
<div class="t " style="left:1854px;top:994px;">发送</div>
<svg class="a" style="left:1892px;top:999px" width="6" height="3" viewBox="0 0 6 3"><path d="M0 0 H6 L3 3 Z" fill="#000"/></svg>
<div class="a" style="left:570px;top:912px;width:168px;height:38px;border:3px solid #ff1c1c;border-radius:4px"></div>
<div class="a" style="left:1804px;top:959px;width:98px;height:62px;border:3px solid #ff1c1c;border-radius:4px"></div>
<div class="a" style="left:0;top:1021px;width:1920px;height:1px;background:#d9d9d9"></div>
</div></body></html>
